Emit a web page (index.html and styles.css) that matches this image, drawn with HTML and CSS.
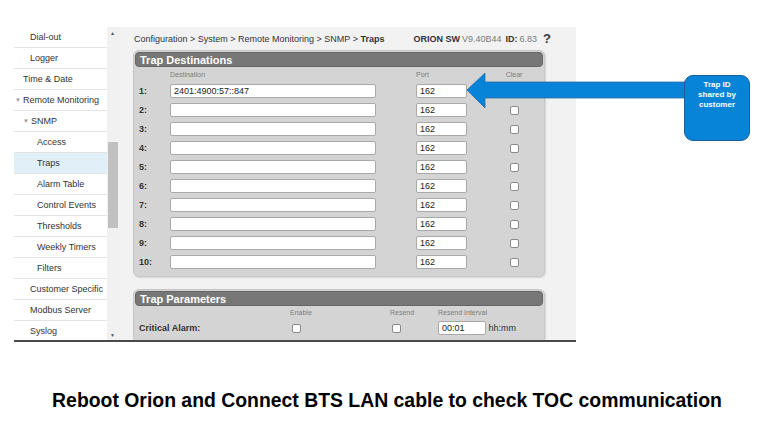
FILE: index.html
```html
<!DOCTYPE html>
<html lang="en">
<head>
    <meta charset="UTF-8">
    <title>SNMP Traps</title>
    <link rel="stylesheet" href="styles.css">
</head>
<body>
    <div class="slide">
        <div class="screen">
            <ul class="side-menu">
                <li class="lvl2">Dial-out</li>
                <li class="lvl2">Logger</li>
                <li class="lvl1">Time &amp; Date</li>
                <li class="lvl0"><span class="tri">&#9660;</span>Remote Monitoring</li>
                <li class="lvl1"><span class="tri">&#9660;</span>SNMP</li>
                <li class="lvl3">Access</li>
                <li class="lvl3 active">Traps</li>
                <li class="lvl3">Alarm Table</li>
                <li class="lvl3">Control Events</li>
                <li class="lvl3">Thresholds</li>
                <li class="lvl3">Weekly Timers</li>
                <li class="lvl3">Filters</li>
                <li class="lvl2">Customer Specific</li>
                <li class="lvl2">Modbus Server</li>
                <li class="lvl2">Syslog</li>
            </ul>
            <div class="scrollbar">
                <span class="scroll-arrow">&#9650;</span>
                <div class="scroll-thumb"></div>
                <span class="scroll-arrow down">&#9660;</span>
            </div>

            <div class="content">
                <div class="top-bar">
                    <div class="crumbs">Configuration &gt; System &gt; Remote Monitoring &gt; SNMP &gt; <b>Traps</b></div>
                    <div class="version">
                        <b>ORION SW</b> <span class="dim">V9.40B44</span>
                        <b class="id-label">ID:</b> <span class="dim">6.83</span>
                        <span class="help">?</span>
                    </div>
                </div>

                <div class="panel">
                    <div class="panel-title">Trap Destinations</div>
                    <div class="dest-grid">
                        <span></span><span class="col-head">Destination</span><span class="col-head">Port</span><span class="col-head center">Clear</span>

                        <b>1:</b><input class="dest" value="2401:4900:57::847"><input class="port" value="162"><span class="center"><i class="check"></i></span>
                        <b>2:</b><input class="dest"><input class="port" value="162"><span class="center"><i class="check"></i></span>
                        <b>3:</b><input class="dest"><input class="port" value="162"><span class="center"><i class="check"></i></span>
                        <b>4:</b><input class="dest"><input class="port" value="162"><span class="center"><i class="check"></i></span>
                        <b>5:</b><input class="dest"><input class="port" value="162"><span class="center"><i class="check"></i></span>
                        <b>6:</b><input class="dest"><input class="port" value="162"><span class="center"><i class="check"></i></span>
                        <b>7:</b><input class="dest"><input class="port" value="162"><span class="center"><i class="check"></i></span>
                        <b>8:</b><input class="dest"><input class="port" value="162"><span class="center"><i class="check"></i></span>
                        <b>9:</b><input class="dest"><input class="port" value="162"><span class="center"><i class="check"></i></span>
                        <b>10:</b><input class="dest"><input class="port" value="162"><span class="center"><i class="check"></i></span>
                    </div>
                </div>

                <div class="panel">
                    <div class="panel-title">Trap Parameters</div>
                    <div class="param-grid">
                        <span></span><span class="col-head">Enable</span><span class="col-head">Resend</span><span class="col-head">Resend Interval</span>

                        <b>Critical Alarm:</b><span><i class="check"></i></span><span><i class="check"></i></span><span><input class="interval" value="00:01"> hh:mm</span>
                    </div>
                </div>
            </div>
        </div>

        <p class="caption">Reboot Orion and Connect BTS LAN cable to check TOC communication</p>

        <svg class="arrow" width="224" height="40" viewBox="0 0 224 40">
            <polygon points="2,18 20,1 20,10 222,10 222,26 20,26 20,36" fill="#0783d8" stroke="#2b6ca8" stroke-width="0.8"/>
        </svg>
        <div class="callout">Trap ID<br>shared by<br>customer</div>
    </div>
</body>
</html>
```

FILE: styles.css
```css
body {
    margin: 0;
    font-family: "Liberation Sans", Arial, sans-serif;
    color: #333;
    background: #fff;
}

.slide {
    position: relative;
    width: 757px;
    height: 434px;
    overflow: hidden;
}

.screen {
    display: flex;
    margin: 27px 0 0 14px;
    width: 562px;
    height: 313px;
    border-bottom: 2px solid #4a4a4a;
    overflow: hidden;
}

/* left menu */

.side-menu {
    list-style: none;
    margin: 0;
    padding: 0;
    width: 93px;
    background: #fff;
}

.side-menu li {
    height: 20px;
    line-height: 20px;
    font-size: 9px;
    color: #333;
    border-bottom: 1px solid #e4e4e4;
    white-space: nowrap;
}

.side-menu .lvl0 { padding-left: 1px; }
.side-menu .lvl1 { padding-left: 9px; }
.side-menu .lvl2 { padding-left: 16px; }
.side-menu .lvl3 { padding-left: 23px; }

.side-menu .active {
    background: #e1eff9;
}

.side-menu .tri {
    font-size: 6px;
    color: #999;
    margin-right: 2px;
    vertical-align: 1px;
}

.scrollbar {
    display: flex;
    flex-direction: column;
    width: 11px;
    background: #f1f1f1;
}

.scroll-arrow {
    height: 12px;
    line-height: 12px;
    font-size: 5px;
    color: #505050;
    text-align: center;
}

.scroll-arrow.down {
    margin-top: auto;
    line-height: 14px;
}

.scroll-thumb {
    margin: 103px 0 0 1px;
    width: 10px;
    height: 86px;
    background: #c1c1c1;
}

/* main area */

.content {
    flex: 1;
    background: #f2f2f2;
    padding: 0 0 0 15px;
}

.top-bar {
    display: flex;
    justify-content: space-between;
    align-items: center;
    width: 418px;
    height: 23px;
    font-size: 9px;
}

.crumbs {
    padding-left: 1px;
}

.version {
    display: flex;
    align-items: center;
    gap: 2px;
    font-size: 9px;
}

.version .dim {
    color: #7a7a7a;
}

.version .id-label {
    margin-left: 2px;
}

.help {
    margin-left: 4px;
    font-size: 13px;
    font-weight: bold;
    color: #3a3a3a;
}

.panel {
    width: 410px;
    background: #d4d4d4;
    border: 1px solid #c6c6c6;
    border-radius: 6px;
    box-shadow: 1px 1px 2px rgba(0, 0, 0, 0.12);
    padding: 1px 0 7px;
    margin-bottom: 12px;
}

.panel-title {
    margin: 0 1px;
    height: 15px;
    line-height: 15px;
    padding-left: 4px;
    background: #777;
    border: 1px solid #666;
    border-radius: 4px;
    color: #fff;
    font-size: 11px;
    font-weight: bold;
    box-sizing: border-box;
}

.dest-grid {
    display: grid;
    grid-template-columns: 31px 246px 71px 54px;
    grid-template-rows: 8px;
    grid-auto-rows: 14px;
    row-gap: 5px;
    align-items: center;
    padding: 4px 0 0 5px;
    font-size: 9px;
}

.col-head {
    font-size: 7px;
    line-height: 8px;
    color: #7d7d7d;
}

.center {
    text-align: center;
}

input {
    box-sizing: border-box;
    height: 14px;
    border: 1px solid #a9a9a9;
    border-radius: 2px;
    padding: 0 3px;
    font-family: "Liberation Sans", Arial, sans-serif;
    font-size: 9px;
    color: #222;
    background: #fff;
}

input.dest { width: 206px; }
input.port { width: 51px; }
input.interval { width: 48px; }

.check {
    display: inline-block;
    box-sizing: border-box;
    width: 9px;
    height: 9px;
    border: 1px solid #8a8a8a;
    border-radius: 2px;
    background: #fff;
    vertical-align: middle;
}

.param-grid {
    display: grid;
    grid-template-columns: 151px 100px 48px 120px;
    grid-template-rows: 10px 14px;
    row-gap: 3px;
    align-items: center;
    padding: 2px 0 0 5px;
    font-size: 9px;
}

.param-grid .check {
    margin-left: 2px;
}

/* slide annotations */

.caption {
    margin: 47px 0 0;
    padding-left: 17px;
    text-align: center;
    font-size: 19.4px;
    line-height: 22px;
    font-weight: bold;
    color: #000;
}

.arrow {
    position: absolute;
    left: 465px;
    top: 72px;
}

.callout {
    position: absolute;
    left: 684px;
    top: 75px;
    box-sizing: border-box;
    width: 66px;
    height: 66px;
    padding: 4px 2px 0;
    background: #0783d8;
    border: 1px solid #1d5f9c;
    border-radius: 9px;
    color: #fff;
    font-size: 8px;
    line-height: 10px;
    font-weight: bold;
    text-align: center;
}
```
